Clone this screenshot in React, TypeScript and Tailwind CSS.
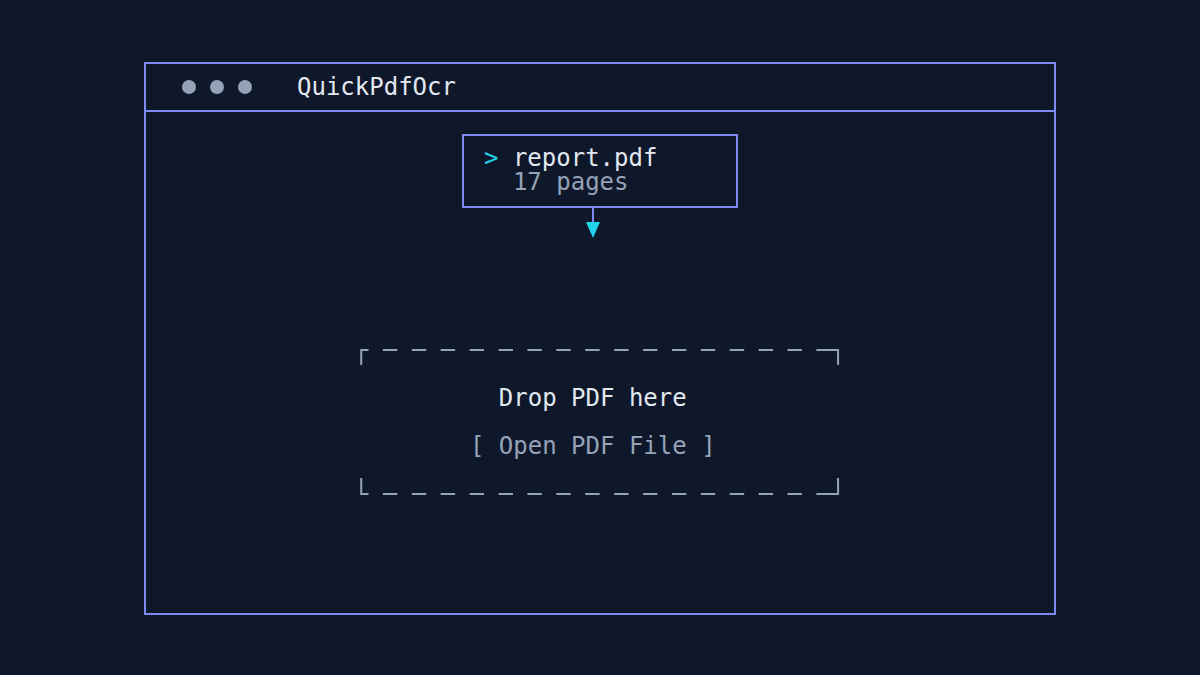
import React from 'react';

const mono = { fontFamily: '"DejaVu Sans Mono", "Liberation Mono", monospace' };

const CELL = 14.45;
const DASHES = Array.from({ length: 16 }, (_, i) => i);

// top/bottom edge of the dashed drop zone, drawn like a box-drawing line
const DropEdge: React.FC<{ bottom?: boolean }> = ({ bottom }) => {
  const h = bottom ? 17 : 16;
  const y = bottom ? 16 : 1;
  const left = CELL / 2;
  const right = CELL * 33 + CELL / 2;
  return (
    <svg width={CELL * 34} height={h} className="block" stroke="#94a3b8" strokeWidth={2} fill="none">
      <path d={bottom ? `M${left} 0 V${y} H${CELL}` : `M${left} ${h} V${y} H${CELL}`} />
      {DASHES.map((i) => {
        const x = CELL * (2 + i * 2);
        return <line key={i} x1={x} y1={y} x2={x + CELL} y2={y} />;
      })}
      <path d={bottom ? `M${CELL * 33} ${y} H${right} V0` : `M${CELL * 33} ${y} H${right} V${h}`} />
    </svg>
  );
};

const App: React.FC = () => {
  return (
    <div className="w-[1200px] h-[675px] bg-[#0f172a] flex justify-center pt-[62px]" style={mono}>
      <div className="w-[912px] h-[553px] border-2 border-[#7f89f2] flex flex-col">
        {/* Title bar */}
        <div className="h-[48px] shrink-0 border-b-2 border-[#7f89f2] flex items-center pl-[36px]">
          <div className="flex items-center gap-[14px]">
            <span className="w-[14px] h-[14px] rounded-full bg-[#94a3b8]" />
            <span className="w-[14px] h-[14px] rounded-full bg-[#94a3b8]" />
            <span className="w-[14px] h-[14px] rounded-full bg-[#94a3b8]" />
          </div>
          <span className="ml-[45px] text-[24px] leading-[24px] text-[#e2e8f0]">QuickPdfOcr</span>
        </div>

        {/* Body */}
        <div className="flex-1 flex flex-col items-center pt-[22px]">
          <div className="w-[276px] h-[74px] border-2 border-[#7f89f2] pt-[10px] pl-[20px] text-[24px] leading-[24px] whitespace-pre">
            <div>
              <span className="text-[#22d3ee]">&gt;</span>
              <span className="text-[#e2e8f0]"> report.pdf</span>
            </div>
            <div className="text-[#94a3b8]">  17 pages</div>
          </div>

          {/* connector */}
          <div className="flex flex-col items-center mr-[15px]">
            <div className="w-[2px] h-[14px] bg-[#7f89f2]" />
            <svg width="14" height="16" viewBox="0 0 14 16" className="block">
              <path d="M0 0 H14 L7 16 Z" fill="#22d3ee" />
            </svg>
          </div>

          {/* drop zone */}
          <div className="mt-[111px] flex flex-col text-[24px] leading-[24px] whitespace-pre">
            <DropEdge />
            <div className="mt-[21px] pl-[144.5px] text-[#e2e8f0]">Drop PDF here</div>
            <div className="mt-[24px] pl-[115.6px] text-[#94a3b8]">[ Open PDF File ]</div>
            <div className="mt-[20px]">
              <DropEdge bottom />
            </div>
          </div>
        </div>
      </div>
    </div>
  );
};

export default App;
